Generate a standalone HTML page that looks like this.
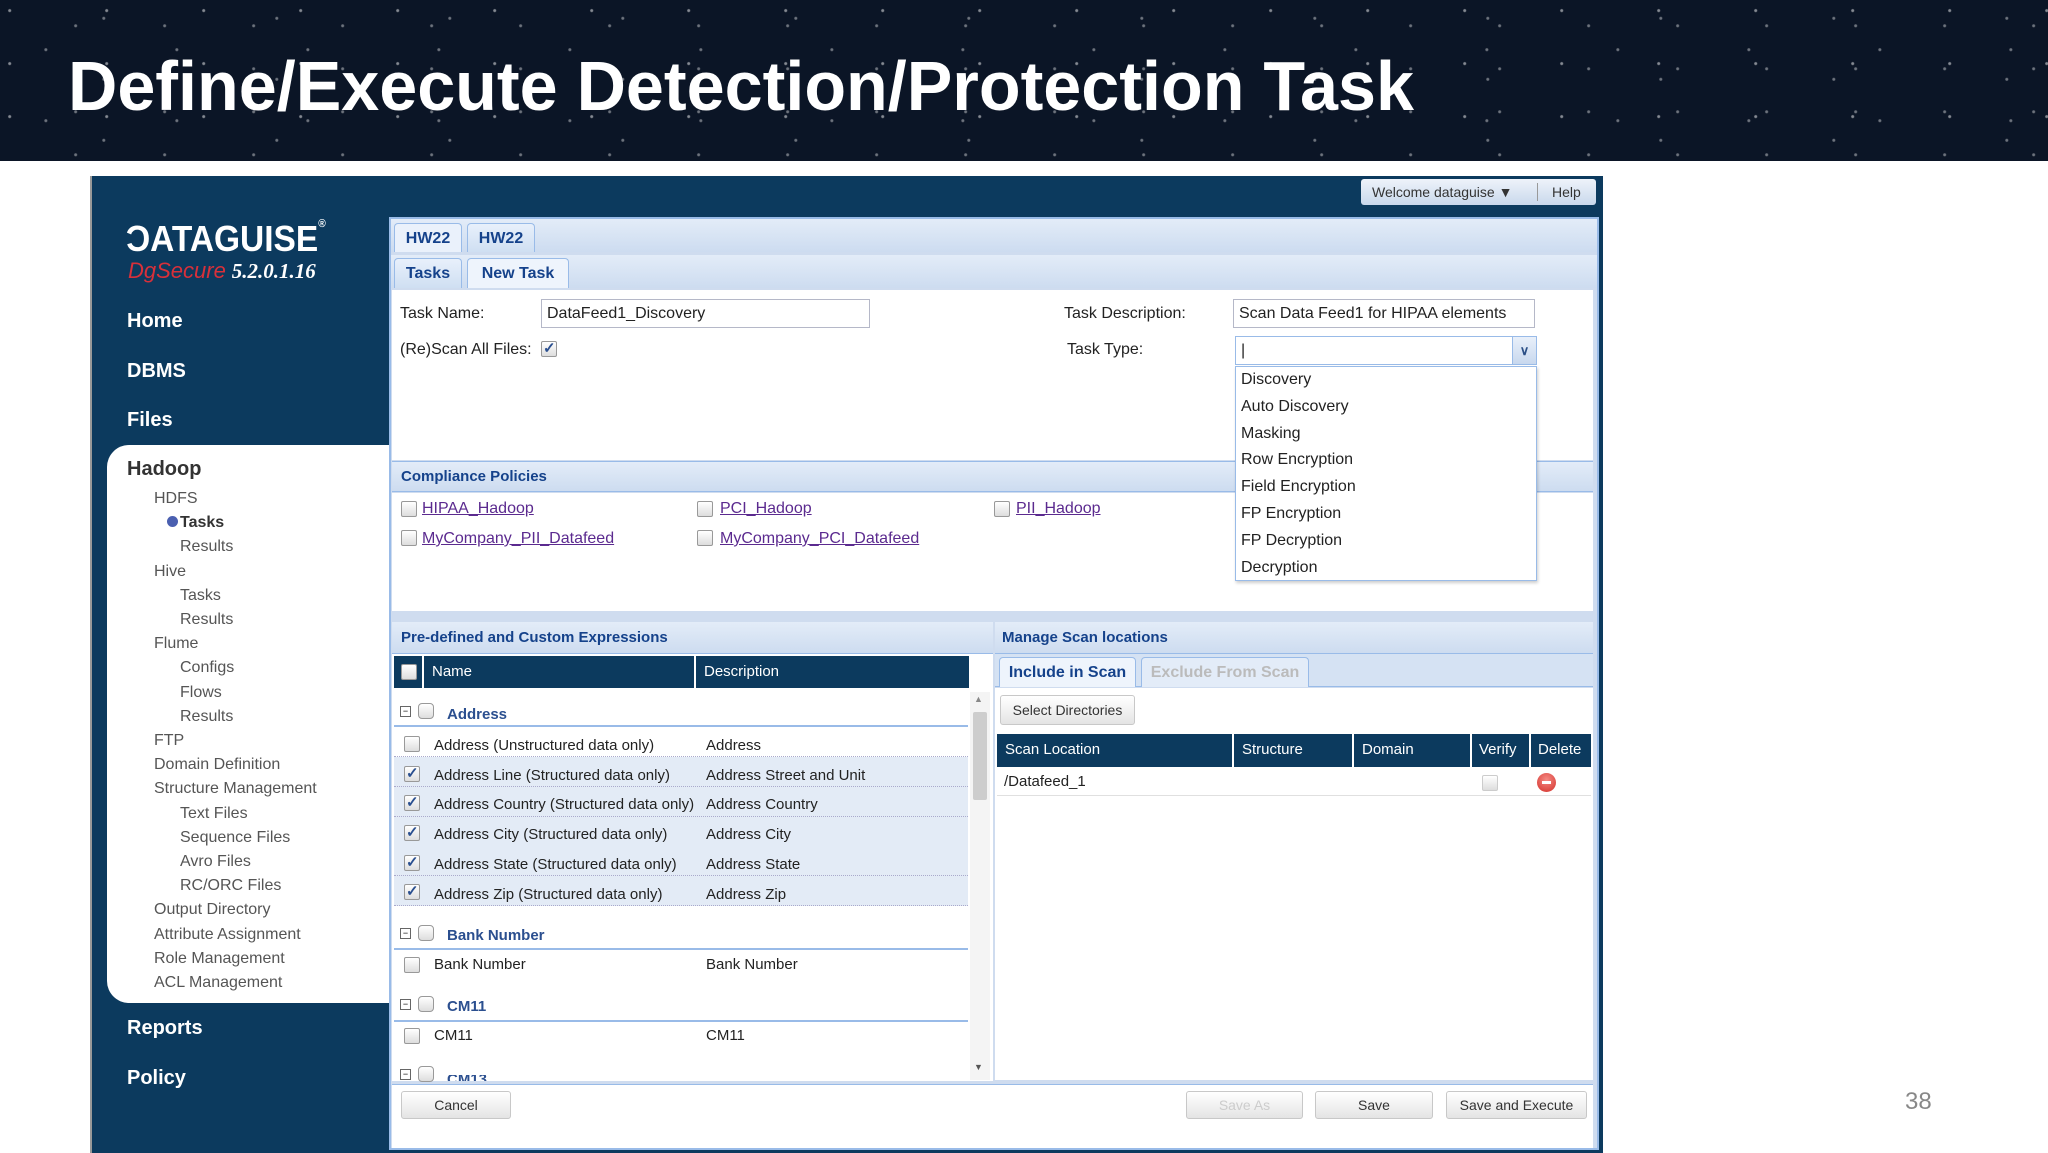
<!DOCTYPE html>
<html><head><meta charset="utf-8">
<style>
*{margin:0;padding:0;box-sizing:border-box}
body{width:2048px;height:1153px;position:relative;background:#fff;font-family:"Liberation Sans",sans-serif;overflow:hidden}
.a{position:absolute}
.band{left:0;top:0;width:2048px;height:161px;background:#0b1526;
background-image:radial-gradient(circle at 10% 20%,rgba(255,255,255,.5) 0 1px,transparent 2px),radial-gradient(circle at 35% 70%,rgba(255,255,255,.4) 0 1px,transparent 2px),radial-gradient(circle at 60% 30%,rgba(255,255,255,.4) 0 1px,transparent 2px),radial-gradient(circle at 85% 60%,rgba(255,255,255,.4) 0 1px,transparent 2px);background-size:97px 53px,131px 71px,173px 61px,89px 43px}
.app{left:90px;top:176px;width:1513px;height:977px;background:#0c3a5e;border-left:2px solid #999}
.t{font-size:16px;color:#222;white-space:nowrap}
.nav{color:#fff;font-weight:bold;font-size:20px}
.side{color:#555;font-size:16px}
.blue{background:linear-gradient(#e3ecf8,#cddcf0)}
.tab{border:1px solid #99bbe8;border-bottom:none;border-radius:4px 4px 0 0;background:linear-gradient(#e8f0fb,#cfdff2);color:#15428b;font-weight:bold;font-size:16px;text-align:center;line-height:30px}
.inp{background:#fff;border:1px solid #b5b8c8;font-size:16px;line-height:27px;padding-left:5px;color:#222}
.cb{width:16px;height:16px;border:1px solid #999;background:linear-gradient(#fff,#ddd);border-radius:2px}
.ck::after{content:"✓";position:absolute;left:1px;top:-3px;font-size:15px;color:#2a4f8f;font-weight:bold}
.lnk{color:#5b2a8f;text-decoration:underline;font-size:16px}
.hdr{color:#15428b;font-weight:bold;font-size:15px}
.th{background:#0c3a5e;color:#fff;font-size:15px;line-height:32px;padding-left:8px;border-right:2px solid #fff}
.btn{border:1px solid #c8c8c8;border-radius:3px;background:linear-gradient(#fff,#e4e4e4);font-size:14px;color:#333;text-align:center}
.row{position:absolute;left:394px;width:574px;height:30px;border-bottom:1px dotted #aac}
.row.s{background:#e3ebf6}
.grp{position:absolute;left:394px;width:574px;border-bottom:2px solid #99bbe8}
</style></head><body>
<div class="a band"></div>
<svg class="a" style="left:0;top:0" width="2048" height="161"><text x="68" y="110" font-family="Liberation Sans" font-weight="bold" font-size="70" fill="#fff" textLength="1346" lengthAdjust="spacingAndGlyphs">Define/Execute Detection/Protection Task</text></svg>
<div class="a" style="left:1905px;top:1088px;font-size:24px;color:#888">38</div>

<div class="a app"></div>
<div class="a" style="left:1361px;top:179px;width:235px;height:26px;border-radius:3px;background:linear-gradient(#eef3fa,#c9d8ec);font-size:14px;color:#333;line-height:26px">
<span style="position:absolute;left:11px">Welcome dataguise ▼</span><span style="position:absolute;left:176px;top:4px;height:18px;border-left:1px solid #999"></span><span style="position:absolute;left:191px">Help</span></div>
<div class="a" style="left:126px;top:218px;color:#fff;font-weight:bold;font-size:36px;transform:scaleX(.93);transform-origin:left">ƆATAGUISE<sup style="font-size:11px;vertical-align:top">®</sup></div>
<div class="a" style="left:128px;top:258px;font-style:italic;font-weight:bold;font-size:21px"><span style="color:#d8303a;font-weight:normal;font-size:22px">DgSecure</span> <span style="color:#fff;font-family:'Liberation Serif',serif">5.2.0.1.16</span></div>
<div class="a nav" style="left:127px;top:310px">Home</div>
<div class="a nav" style="left:127px;top:360px">DBMS</div>
<div class="a nav" style="left:127px;top:409px">Files</div>
<div class="a nav" style="left:127px;top:1017px">Reports</div>
<div class="a nav" style="left:127px;top:1067px">Policy</div>
<div class="a" style="left:107px;top:445px;width:284px;height:558px;background:#fff;border-radius:22px 0 0 22px"></div>
<div class="a" style="left:127px;top:458px;font-weight:bold;font-size:20px;color:#333">Hadoop</div>
<div class="a" style="left:167px;top:516px;width:11px;height:11px;border-radius:50%;background:#4a5fb0"></div>
<div class="a side" style="left:154px;top:487px;line-height:24.2px">
HDFS<br><span style="padding-left:26px;font-weight:bold;color:#333">Tasks</span><br><span style="padding-left:26px">Results</span><br>Hive<br><span style="padding-left:26px">Tasks</span><br><span style="padding-left:26px">Results</span><br>Flume<br><span style="padding-left:26px">Configs</span><br><span style="padding-left:26px">Flows</span><br><span style="padding-left:26px">Results</span><br>FTP<br>Domain Definition<br>Structure Management<br><span style="padding-left:26px">Text Files</span><br><span style="padding-left:26px">Sequence Files</span><br><span style="padding-left:26px">Avro Files</span><br><span style="padding-left:26px">RC/ORC Files</span><br>Output Directory<br>Attribute Assignment<br>Role Management<br>ACL Management</div>

<div class="a" style="left:389px;top:217px;width:1210px;height:933px;background:#cfdcef;border:2px solid #99bbe8"></div>
<div class="a blue" style="left:391px;top:219px;width:1206px;height:33px"></div>
<div class="a tab" style="left:394px;top:223px;width:68px;height:29px;background:#eaf1fb">HW22</div>
<div class="a tab" style="left:467px;top:223px;width:68px;height:29px">HW22</div>
<div class="a blue" style="left:391px;top:255px;width:1206px;height:33px"></div>
<div class="a tab" style="left:394px;top:258px;width:68px;height:30px">Tasks</div>
<div class="a tab" style="left:467px;top:258px;width:102px;height:30px;background:#eef4fc">New Task</div>
<div class="a" style="left:392px;top:290px;width:1201px;height:170px;background:#fff"></div>
<div class="a t" style="left:400px;top:305px">Task Name:</div>
<div class="a inp" style="left:541px;top:299px;width:329px;height:29px">DataFeed1_Discovery</div>
<div class="a t" style="left:400px;top:341px">(Re)Scan All Files:</div>
<div class="a cb ck" style="left:541px;top:341px"></div>
<div class="a t" style="left:1064px;top:305px">Task Description:</div>
<div class="a inp" style="left:1233px;top:299px;width:302px;height:29px">Scan Data Feed1 for HIPAA elements</div>
<div class="a t" style="left:1067px;top:341px">Task Type:</div>
<div class="a blue" style="left:392px;top:461px;width:1201px;height:31px;border-top:1px solid #99bbe8;border-bottom:1px solid #99bbe8"></div>
<div class="a hdr" style="left:401px;top:468px">Compliance Policies</div>
<div class="a" style="left:392px;top:493px;width:1201px;height:118px;background:#fff"></div>
<div class="a cb" style="left:401px;top:501px"></div><div class="a lnk" style="left:422px;top:500px">HIPAA_Hadoop</div>
<div class="a cb" style="left:697px;top:501px"></div><div class="a lnk" style="left:720px;top:500px">PCI_Hadoop</div>
<div class="a cb" style="left:994px;top:501px"></div><div class="a lnk" style="left:1016px;top:500px">PII_Hadoop</div>
<div class="a cb" style="left:401px;top:530px"></div><div class="a lnk" style="left:422px;top:530px">MyCompany_PII_Datafeed</div>
<div class="a cb" style="left:697px;top:530px"></div><div class="a lnk" style="left:720px;top:530px">MyCompany_PCI_Datafeed</div>

<div class="a inp" style="left:1235px;top:336px;width:302px;height:29px;border-color:#99bbe8">|</div>
<div class="a" style="left:1512px;top:337px;width:24px;height:27px;background:linear-gradient(#e9f0fa,#c8d8ee);border-left:1px solid #99bbe8;text-align:center;color:#2b4f86;font-size:13px;line-height:27px;font-weight:bold">&#8744;</div>
<div class="a" style="left:1235px;top:366px;width:302px;height:215px;background:#fff;border:1px solid #99bbe8;box-shadow:1px 2px 3px rgba(0,0,0,.2)"></div>
<div class="a t" style="left:1241px;top:367px;line-height:26.8px">Discovery<br>Auto Discovery<br>Masking<br>Row Encryption<br>Field Encryption<br>FP Encryption<br>FP Decryption<br>Decryption</div>

<div class="a blue" style="left:392px;top:622px;width:601px;height:32px;border-bottom:1px solid #99bbe8"></div>
<div class="a hdr" style="left:401px;top:629px">Pre-defined and Custom Expressions</div>
<div class="a" style="left:392px;top:654px;width:601px;height:427px;background:#fff"></div>
<div class="a th" style="left:394px;top:656px;width:30px;height:32px;padding:0"><div class="cb" style="margin:8px 0 0 7px"></div></div>
<div class="a th" style="left:424px;top:656px;width:272px;height:32px">Name</div>
<div class="a th" style="left:696px;top:656px;width:273px;height:32px;border-right:none">Description</div>
<div class="a" style="left:970px;top:692px;width:20px;height:388px;background:#f4f4f4"></div>
<div class="a" style="left:973px;top:712px;width:14px;height:88px;background:#cdcdcd;border-radius:2px"></div>
<div class="a" style="left:974px;top:694px;font-size:9px;color:#888">▲</div>
<div class="a" style="left:974px;top:1062px;font-size:9px;color:#555">▼</div>

<div class="grp" style="top:692px;height:35px"></div>
<div class="a" style="left:400px;top:706px;width:11px;height:11px;border:1px solid #666;font-size:9px;line-height:8px;text-align:center">−</div>
<div class="a cb" style="left:418px;top:703px;border-radius:4px"></div>
<div class="a hdr" style="left:447px;top:706px;color:#2b4f8f">Address</div>
<div class="row" style="top:727px"></div>
<div class="row s" style="top:757px"></div>
<div class="row s" style="top:787px"></div>
<div class="row s" style="top:817px"></div>
<div class="row s" style="top:846px"></div>
<div class="row s" style="top:876px"></div>
<div class="a cb" style="left:404px;top:736px"></div>
<div class="a cb ck" style="left:404px;top:766px"></div>
<div class="a cb ck" style="left:404px;top:795px"></div>
<div class="a cb ck" style="left:404px;top:825px"></div>
<div class="a cb ck" style="left:404px;top:855px"></div>
<div class="a cb ck" style="left:404px;top:884px"></div>
<div class="a t" style="left:434px;top:731px;line-height:29.7px;font-size:15px">Address (Unstructured data only)<br>Address Line (Structured data only)<br>Address Country (Structured data only)<br>Address City (Structured data only)<br>Address State (Structured data only)<br>Address Zip (Structured data only)</div>
<div class="a t" style="left:706px;top:731px;line-height:29.7px;font-size:15px">Address<br>Address Street and Unit<br>Address Country<br>Address City<br>Address State<br>Address Zip</div>

<div class="grp" style="top:906px;height:44px"></div>
<div class="a" style="left:400px;top:928px;width:11px;height:11px;border:1px solid #666;font-size:9px;line-height:8px;text-align:center">−</div>
<div class="a cb" style="left:418px;top:925px;border-radius:4px"></div>
<div class="a hdr" style="left:447px;top:927px;color:#2b4f8f">Bank Number</div>
<div class="a cb" style="left:404px;top:957px"></div>
<div class="a t" style="left:434px;top:956px;font-size:15px">Bank Number</div>
<div class="a t" style="left:706px;top:956px;font-size:15px">Bank Number</div>

<div class="grp" style="top:980px;height:42px"></div>
<div class="a" style="left:400px;top:999px;width:11px;height:11px;border:1px solid #666;font-size:9px;line-height:8px;text-align:center">−</div>
<div class="a cb" style="left:418px;top:996px;border-radius:4px"></div>
<div class="a hdr" style="left:447px;top:998px;color:#2b4f8f">CM11</div>
<div class="a cb" style="left:404px;top:1028px"></div>
<div class="a t" style="left:434px;top:1027px;font-size:15px">CM11</div>
<div class="a t" style="left:706px;top:1027px;font-size:15px">CM11</div>
<div class="a" style="left:400px;top:1069px;width:11px;height:11px;border:1px solid #666;font-size:9px;line-height:8px;text-align:center">−</div>
<div class="a cb" style="left:418px;top:1066px;border-radius:4px"></div>
<div class="a" style="left:392px;top:1075px;width:580px;height:6px;overflow:hidden"><div class="hdr" style="position:absolute;left:55px;top:-4px;color:#2b4f8f">CM13</div></div>

<div class="a blue" style="left:995px;top:622px;width:598px;height:32px;border-bottom:1px solid #99bbe8"></div>
<div class="a hdr" style="left:1002px;top:629px">Manage Scan locations</div>
<div class="a" style="left:995px;top:654px;width:598px;height:33px;background:#d5e2f3;border-bottom:1px solid #99bbe8"></div>
<div class="a tab" style="left:999px;top:657px;width:137px;height:30px;background:#eef4fc">Include in Scan</div>
<div class="a tab" style="left:1141px;top:657px;width:168px;height:30px;color:#bbb;background:#e3ecf8">Exclude From Scan</div>
<div class="a" style="left:995px;top:688px;width:598px;height:392px;background:#fff"></div>
<div class="a btn" style="left:1000px;top:695px;width:135px;height:30px;line-height:28px">Select Directories</div>
<div class="a th" style="left:997px;top:734px;width:237px;height:33px">Scan Location</div>
<div class="a th" style="left:1234px;top:734px;width:120px;height:33px">Structure</div>
<div class="a th" style="left:1354px;top:734px;width:118px;height:33px">Domain</div>
<div class="a th" style="left:1472px;top:734px;width:59px;height:33px;padding-left:7px">Verify</div>
<div class="a th" style="left:1531px;top:734px;width:60px;height:33px;border:none;padding-left:7px">Delete</div>
<div class="a t" style="left:1004px;top:773px;font-size:15px">/Datafeed_1</div>
<div class="a" style="left:997px;top:795px;width:594px;border-bottom:1px solid #e0e0e0"></div>
<div class="a cb" style="left:1482px;top:775px;border-color:#ccc"></div>
<div class="a" style="left:1537px;top:773px;width:19px;height:19px;border-radius:50%;background:radial-gradient(circle at 50% 35%,#f58a84,#d3302a);"><div style="position:absolute;left:5px;top:8px;width:9px;height:3px;background:#fff"></div></div>

<div class="a" style="left:392px;top:1084px;width:1201px;height:64px;background:#fff;border-top:1px solid #99bbe8"></div>
<div class="a btn" style="left:401px;top:1091px;width:110px;height:28px;line-height:26px">Cancel</div>
<div class="a btn" style="left:1186px;top:1091px;width:117px;height:28px;line-height:26px;color:#ccc">Save As</div>
<div class="a btn" style="left:1315px;top:1091px;width:118px;height:28px;line-height:26px">Save</div>
<div class="a btn" style="left:1446px;top:1091px;width:141px;height:28px;line-height:26px">Save and Execute</div>
</body></html>
